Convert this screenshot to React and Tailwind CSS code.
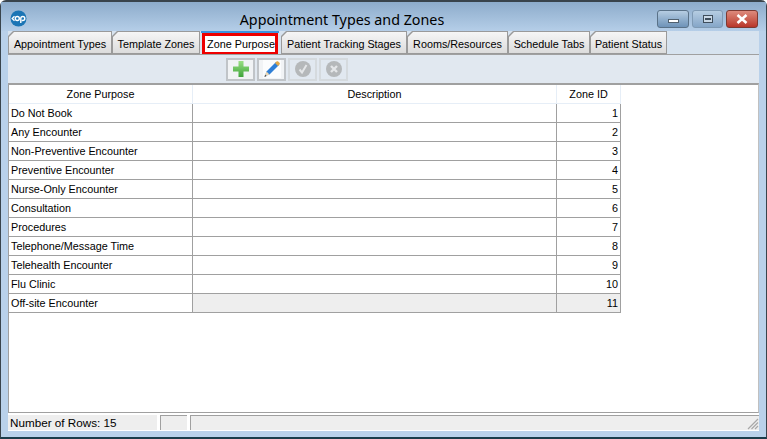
import React from 'react';

const tabs = [
  { label: 'Appointment Types', w: 'w-[104px]' },
  { label: 'Template Zones', w: 'w-[88px]' },
  { label: 'Zone Purpose', w: 'w-[80px]', active: true },
  { label: 'Patient Tracking Stages', w: 'w-[126px]' },
  { label: 'Rooms/Resources', w: 'w-[101px]' },
  { label: 'Schedule Tabs', w: 'w-[82px]' },
  { label: 'Patient Status', w: 'w-[77px]' },
];

const rows = [
  'Do Not Book',
  'Any Encounter',
  'Non-Preventive Encounter',
  'Preventive Encounter',
  'Nurse-Only Encounter',
  'Consultation',
  'Procedures',
  'Telephone/Message Time',
  'Telehealth Encounter',
  'Flu Clinic',
  'Off-site Encounter',
];

function Logo() {
  return (
    <svg width="17" height="17" viewBox="0 0 17 17" className="mt-[3px] shrink-0">
      <circle cx="8.5" cy="8.5" r="8" fill="#1b75b5" />
      <path d="M4.5 6.2 L2.2 8.5 L4.5 10.8" fill="none" stroke="#fff" strokeWidth="1.3" />
      <circle cx="7.3" cy="8.5" r="2" fill="none" stroke="#fff" strokeWidth="1.4" />
      <path d="M10.8 13 V8.5 a2 2 0 1 1 2 2 h-1" fill="none" stroke="#fff" strokeWidth="1.4" />
    </svg>
  );
}

function Tab({ label, w, active }) {
  if (active) {
    return (
      <div className={`${w} h-[23px] flex flex-col mr-px`}>
        <div className="h-1 mx-[1px] bg-[#3d94e0]" />
        <div className="flex-1 mx-[2px] -mb-px pl-[2px] border-[3px] border-[#ee0000] bg-white flex items-center justify-center text-[10.8px] text-black">
          {label}
        </div>
      </div>
    );
  }
  return (
    <div className={`${w} h-[23px] bg-[#9a9a9a] p-px [clip-path:polygon(5px_0,100%_0,100%_100%,0_100%,0_5px)]`}>
      <div className="h-full pt-[3px] flex items-center justify-center bg-gradient-to-b from-[#f6f6f6] to-[#dcdcdc] text-[10.8px] text-black [clip-path:polygon(5px_0,100%_0,100%_100%,0_100%,0_5px)]">
        {label}
      </div>
    </div>
  );
}

function ToolButton({ children, dim }) {
  return (
    <div className={`w-[29px] h-[23px] border-2 flex items-center justify-center ${dim ? 'border-[#d5dade]' : 'border-[#c0c4c8] bg-[#f1f3f5]'}`}>
      {children}
    </div>
  );
}

export default function App() {
  return (
    <div className="w-[767px] h-[439px] overflow-hidden bg-white font-['Liberation_Sans',sans-serif]">
      <div className="h-full flex flex-col rounded-t-[6px] border-t-2 border-x border-[#39444c] border-b-2 border-b-[#1a3c4a] bg-[#b9d1ea]">
        {/* Title bar */}
        <div className="h-[29px] shrink-0 flex items-center pl-[9px] bg-gradient-to-b from-[#8daccb] to-[#b5cee8]">
          <Logo />
          <div className="flex-1 text-center text-[14.3px] text-black font-['Noto_Sans',sans-serif] mt-[6px]">
            Appointment Types and Zones
          </div>
          <div className="flex gap-[3px] mr-[8px] mt-[5px]">
            <div className="w-[32px] h-[18px] rounded-[3px] border border-[#5a7288] bg-gradient-to-b from-[#b6cde2] to-[#6e93b8] flex items-center justify-center">
              <div className="w-[11px] h-[4px] mt-[3px] bg-white border border-[#50606e]" />
            </div>
            <div className="w-[31px] h-[18px] rounded-[3px] border border-[#7f9ab4] bg-gradient-to-b from-[#b6cde2] to-[#85a6c8] flex items-center justify-center">
              <div className="w-[10px] h-[8px] border border-[#3f4e5c] bg-[#c9d8e6] flex items-center justify-center">
                <div className="w-[6px] h-[2px] bg-[#3f4e5c]" />
              </div>
            </div>
            <div className="w-[32px] h-[18px] rounded-[3px] border border-[#7d3a32] bg-gradient-to-b from-[#dd8a7c] to-[#b8352a] flex items-center justify-center">
              <svg width="14" height="10" viewBox="0 0 14 10">
                <path d="M2.5 1 L11.5 9 M11.5 1 L2.5 9" stroke="#fff" strokeWidth="2.6" />
              </svg>
            </div>
          </div>
        </div>

        {/* Content */}
        <div className="flex-1 min-h-0 flex flex-col mx-[7px]">
          <div className="h-[23px] shrink-0 flex bg-[#d7e3ef]">
            {tabs.map(t => <Tab key={t.label} {...t} />)}
          </div>
          <div className="h-[29px] shrink-0 flex items-center gap-[2px] pl-[218px] bg-[#e1e8f0] border-t border-[#a0a0a0]">
            <ToolButton>
              <svg width="18" height="18" viewBox="0 0 18 18">
                <defs>
                  <linearGradient id="plus" x1="0" y1="0" x2="0" y2="1">
                    <stop offset="0" stopColor="#9adf84" />
                    <stop offset="1" stopColor="#3fa43a" />
                  </linearGradient>
                </defs>
                <path d="M6.5 1 H11.5 V6.5 H17 V11.5 H11.5 V17 H6.5 V11.5 H1 V6.5 H6.5 Z" fill="url(#plus)" />
              </svg>
            </ToolButton>
            <ToolButton>
              <svg width="20" height="20" viewBox="0 0 20 20">
                <rect x="1" y="1" width="18" height="18" fill="#fbfcfd" />
                <path d="M3 17 L4.5 12.5 L14 3 L17 6 L7.5 15.5 Z" fill="#2f7fd6" />
                <path d="M13 4 L14.5 2.5 C15 2 15.7 2 16.2 2.5 L17.5 3.8 C18 4.3 18 5 17.5 5.5 L16 7 Z" fill="#e3a94a" />
                <path d="M3 17 L4.5 12.5 L7.5 15.5 Z" fill="#f0d8b0" />
                <path d="M2.5 18 L3 16 L4.5 17 Z" fill="#222" />
              </svg>
            </ToolButton>
            <ToolButton dim>
              <svg width="18" height="18" viewBox="0 0 18 18">
                <circle cx="9" cy="9" r="8" fill="#b5b8ba" />
                <path d="M5.5 9.5 L8 12.5 L12.5 5" fill="none" stroke="#e4e6e8" strokeWidth="2" />
              </svg>
            </ToolButton>
            <ToolButton dim>
              <svg width="18" height="18" viewBox="0 0 18 18">
                <circle cx="9" cy="9" r="8" fill="#b5b8ba" />
                <path d="M6 6 L12 12 M12 6 L6 12" stroke="#e4e6e8" strokeWidth="2.4" />
              </svg>
            </ToolButton>
          </div>

          {/* Grid */}
          <div className="flex-1 min-h-0 bg-white border-t-2 border-x border-b border-[#a0a0a0] border-r-[#c0c0c0]">
            <div className="grid grid-cols-[184px_364px_64px] w-[612px] text-[10.8px] text-black">
              <div className="h-[19px] flex items-center justify-center border-r border-b border-[#e6eef7]">Zone Purpose</div>
              <div className="h-[19px] flex items-center justify-center border-r border-b border-[#e6eef7]">Description</div>
              <div className="h-[19px] flex items-center justify-center border-r border-b border-[#e6eef7]">Zone ID</div>
              {rows.map((name, i) => {
                const last = i === rows.length - 1;
                return (
                  <React.Fragment key={name}>
                    <div className="h-[19px] flex items-center pl-[2px] border-r border-b border-[#a0a0a0]">{name}</div>
                    <div className={`h-[19px] border-r border-b border-[#a0a0a0] ${last ? 'bg-[#eeeeee]' : ''}`} />
                    <div className={`h-[19px] flex items-center justify-end pr-[2px] border-r border-b border-[#a0a0a0] ${last ? 'bg-[#eeeeee]' : ''}`}>{i + 1}</div>
                  </React.Fragment>
                );
              })}
            </div>
          </div>

          {/* Status bar */}
          <div className="h-[18px] shrink-0 flex bg-white pt-[2px] pb-px">
            <div className="w-[149px] bg-[#eeeeee] text-[11.7px] text-black pl-[2px] flex items-center">Number of Rows: 15</div>
            <div className="w-[3px]" />
            <div className="w-[27px] bg-[#eeeeee] border-l border-t border-[#a0a0a0]" />
            <div className="w-[3px]" />
            <div className="flex-1 bg-[#eeeeee] border-l border-t border-[#a0a0a0] flex justify-end items-end">
              <svg width="12" height="12" viewBox="0 0 12 12">
                <path d="M11 1 L1 11 M11 4.5 L4.5 11 M11 8 L8 11" stroke="#a8a8a8" strokeWidth="1.2" />
              </svg>
            </div>
          </div>
        </div>
        <div className="h-[6px] shrink-0" />
      </div>
    </div>
  );
}
